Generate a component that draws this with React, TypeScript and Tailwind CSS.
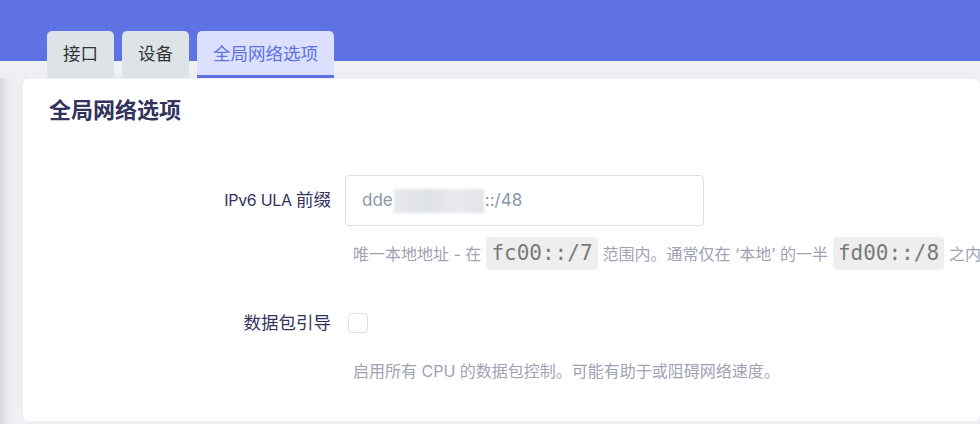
import React from 'react'

const font = "font-['Inter','Noto_Sans_CJK_SC',sans-serif]"

const tabs = [
  { label: '接口', active: false },
  { label: '设备', active: false },
  { label: '全局网络选项', active: true },
]

function Code({ children }: { children: React.ReactNode }) {
  return (
    <code className="mx-[5px] inline-block rounded-[4px] bg-[#eeeeee] px-[5px] font-['DejaVu_Sans_Mono',monospace] text-[21px] leading-[33px] text-[#7a7a7a]">
      {children}
    </code>
  )
}

export default function App() {
  return (
    <div
      className={`${font} h-[424px] w-full overflow-hidden bg-[linear-gradient(90deg,#d7d8db_0px,#e8e9ec_6px,#eef0f3_12px)]`}
    >
      {/* header + tabs */}
      <div className="flex gap-[8px] bg-[linear-gradient(180deg,#5e72e4_0px,#5e72e4_61px,#f1f2f4_61px,#eceef1_79px)] pl-[47px] pt-[31px]">
        {tabs.map((t) => (
          <div
            key={t.label}
            className={
              t.active
                ? 'flex h-[47px] items-center rounded-t-[5px] border-b-[3px] border-[#5e72e4] bg-[#dce0ff] px-[16px] pt-[3px] text-[17.5px] text-[#5e72e4]'
                : 'flex h-[47px] items-center rounded-t-[5px] bg-[#dee3e8] px-[16px] text-[17.5px] text-[#333]'
            }
          >
            {t.label}
          </div>
        ))}
      </div>

      {/* card */}
      <div className="ml-[23px] mt-[1px] h-[342px] rounded-[6px] bg-white pt-[17px]">
        <h2 className="ml-[26px] text-[22px] font-bold leading-[28px] text-[#32325d]">全局网络选项</h2>

        <div className="mt-[51px] flex flex-col">
          {/* IPv6 ULA */}
          <div className="flex items-center">
            <label className="w-[309px] pr-[1px] text-right text-[17.5px] text-[#32325d]">
              <span className="text-[16px] tracking-[-0.3px]">IPv6 ULA </span>前缀
            </label>
            <div className="ml-[13px] flex h-[51px] w-[359px] items-center rounded-[4px] border border-[#dcdfe6] px-[16px] text-[17px] text-[#8898aa]">
              <span>dde</span>
              <span className="mx-[1px] inline-block h-[24px] w-[90px] bg-[linear-gradient(90deg,#e6e8eb,#dfe2e6_40%,#e8eaed_70%,#e1e3e7)] blur-[1.5px]" />
              <span>::/48</span>
            </div>
          </div>
          <div className="ml-[325px] mt-[11px] whitespace-nowrap pl-[5px] text-[16px] leading-[33px] text-[#9fa2b4]">
            唯一本地地址 - 在<Code>fc00::/7</Code>范围内。通常仅在 ‘本地’ 的一半<Code>fd00::/8</Code>之内。
          </div>

          {/* packet steering */}
          <div className="mt-[39px] flex items-center">
            <label className="w-[309px] pr-[1px] text-right text-[17.5px] text-[#32325d]">数据包引导</label>
            <span className="ml-[16px] inline-block h-[20px] w-[20px] rounded-[4px] border border-[#dcdfe6] bg-white" />
          </div>
          <div className="ml-[330px] mt-[23px] text-[16px] leading-[24px] text-[#9fa2b4]">
            启用所有 CPU 的数据包控制。可能有助于或阻碍网络速度。
          </div>
        </div>
      </div>
    </div>
  )
}
